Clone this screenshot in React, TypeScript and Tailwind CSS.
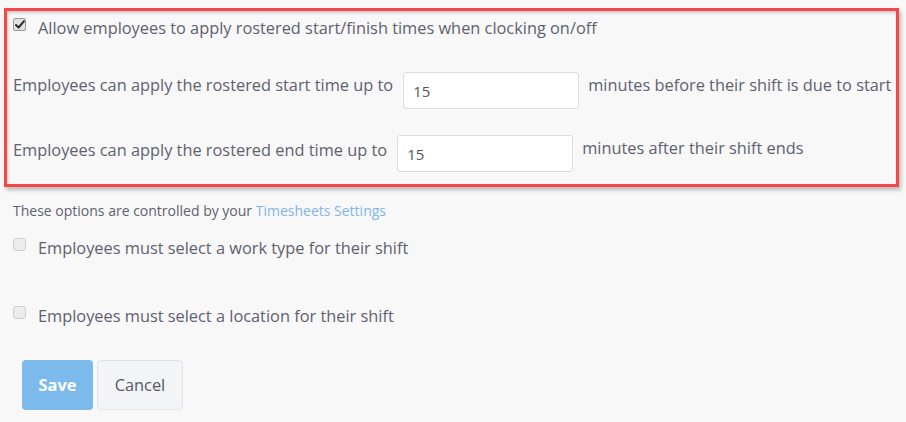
import React from "react";

function Box({ checked }: { checked: boolean }) {
  return checked ? (
    <div className="w-[13px] h-[13px] shrink-0 rounded-[2px] border border-[#9a9a9a] bg-[#e2e2e2] flex items-center justify-center">
      <svg width="10" height="9" viewBox="0 0 10 9">
        <path d="M1 5 L3.6 7.5 L9 1.2" fill="none" stroke="#2a2a2a" strokeWidth="2" strokeLinecap="round" strokeLinejoin="round" />
      </svg>
    </div>
  ) : (
    <div className="w-[13px] h-[13px] shrink-0 rounded-[3px] border border-[#cfcfcf] bg-[#ececec]" />
  );
}

export default function App() {
  return (
    <div className="w-[906px] h-[422px] bg-[#f8f8f8] text-[#5e6170] overflow-hidden" style={{ fontFamily: "'Open Sans', sans-serif" }}>
      <div className="pt-[8px] pl-[4px]">
        <div className="w-[895px] border-[3px] border-[#f44747] bg-[#f8f8f8] shadow-[2px_3px_4px_rgba(0,0,0,0.25),inset_1px_2px_3px_rgba(0,0,0,0.18)] pl-[6px] pt-[7px] pb-[12px]">
          <div className="flex items-start">
            <Box checked />
            <span className="ml-[12px] text-[16.35px] leading-[20px]">Allow employees to apply rostered start/finish times when clocking on/off</span>
          </div>
          <div className="flex items-start mt-[34px]">
            <span className="text-[16.35px] leading-[20px] mt-[3px]">Employees can apply the rostered start time up to</span>
            <div className="ml-[10px] w-[176px] h-[37px] bg-white border border-[#dcdcdc] rounded-[3px] flex items-center pl-[9px] pt-[2px] text-[15px] text-[#555]">15</div>
            <span className="ml-[9px] text-[16.35px] leading-[20px] mt-[3px]">minutes before their shift is due to start</span>
          </div>
          <div className="flex items-start mt-[26px]">
            <span className="text-[16.35px] leading-[20px] mt-[5px]">Employees can apply the rostered end time up to</span>
            <div className="ml-[10px] w-[176px] h-[37px] bg-white border border-[#dcdcdc] rounded-[3px] flex items-center pl-[9px] pt-[2px] text-[15px] text-[#555]">15</div>
            <span className="ml-[9px] text-[16.35px] leading-[20px] mt-[3px]">minutes after their shift ends</span>
          </div>
        </div>
      </div>
      <div className="pl-[13px]">
        <div className="mt-[15px] text-[14px] leading-[18px]">
          These options are controlled by your <span className="text-[#82b5e8]">Timesheets Settings</span>
        </div>
        <div className="flex items-start mt-[18px]">
          <Box checked={false} />
          <span className="ml-[12px] text-[16.35px] leading-[20px]">Employees must select a work type for their shift</span>
        </div>
        <div className="flex items-start mt-[48px]">
          <Box checked={false} />
          <span className="ml-[12px] text-[16.35px] leading-[20px]">Employees must select a location for their shift</span>
        </div>
        <div className="flex mt-[34px] ml-[9px] gap-[4px]">
          <button className="w-[71px] h-[50px] rounded-[4px] bg-[#7bbaeb] text-white font-bold text-[16.35px]">Save</button>
          <button className="w-[86px] h-[50px] rounded-[4px] bg-[#f3f4f7] border border-[#e1e3e8] text-[#55585f] text-[16.35px]">Cancel</button>
        </div>
      </div>
    </div>
  );
}
